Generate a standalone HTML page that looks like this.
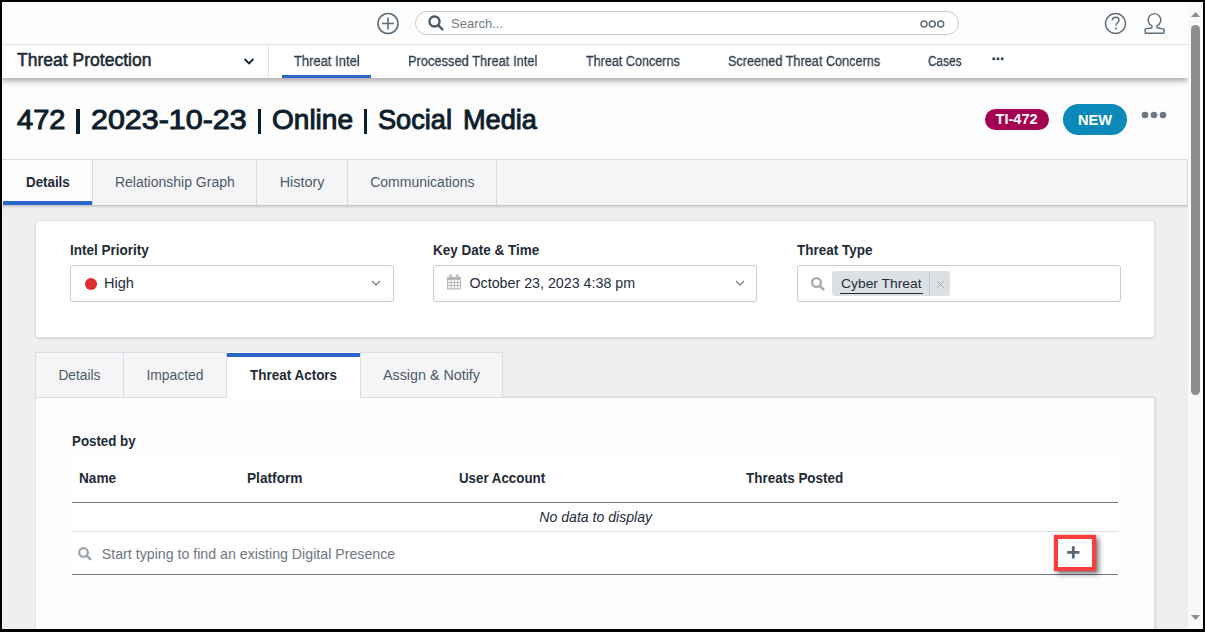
<!DOCTYPE html>
<html><head><meta charset="utf-8"><title>Threat Intel</title>
<style>
html,body{margin:0;padding:0;width:1205px;height:632px;overflow:hidden;background:#000;font-family:"Liberation Sans", sans-serif;}
#c{position:absolute;left:0;top:0;width:1205px;height:632px;overflow:hidden;clip-path:inset(2px 2px 3px 2px);}
.t{position:absolute;z-index:3;white-space:nowrap;line-height:1;}
svg{display:block;z-index:3}
</style></head><body><div id="c">
<div style="position:absolute;left:0px;top:0px;width:1205px;height:632px;background:#efefef"></div>
<div style="position:absolute;left:0px;top:0px;width:1188px;height:44px;background:#fdfdfd"></div>
<div style="position:absolute;left:0px;top:44px;width:1188px;height:1px;background:#dfe3e8"></div>
<div style="position:absolute;left:0px;top:78px;width:1188px;height:81px;background:#fdfdfd"></div>
<div style="position:absolute;left:0px;top:45px;width:1188px;height:33px;background:#fff;box-shadow:0 2px 7px rgba(0,0,0,0.42);z-index:2;clip-path:inset(0 0 -20px 0)"></div>
<svg style="position:absolute;left:376px;top:12px" width="24" height="24" viewBox="0 0 24 24"><circle cx="12" cy="11.5" r="10" fill="none" stroke="#5e6e7a" stroke-width="1.6"/><path d="M12 5.6v11.8M6.1 11.5h11.8" stroke="#5e6e7a" stroke-width="1.6"/></svg>
<div style="position:absolute;left:415px;top:11px;width:543px;height:23px;border:1px solid #c9c9c9;border-radius:12px;background:#fff;box-sizing:border-box;width:544px;height:24px"></div>
<svg style="position:absolute;left:427px;top:14px" width="18" height="18" viewBox="0 0 18 18"><circle cx="7.5" cy="7.5" r="5" fill="none" stroke="#4b5b67" stroke-width="2.4"/><path d="M11.2 11.2l4.2 4.2" stroke="#4b5b67" stroke-width="2.4" stroke-linecap="round"/></svg>
<div class="t" style="left:451.00px;top:17.00px;font-size:13px;font-weight:normal;color:#6f7a84;font-style:normal;">Search...</div>
<svg style="position:absolute;left:919px;top:19px" width="27" height="10" viewBox="0 0 27 10"><g fill="none" stroke="#5e6e7a" stroke-width="1.5"><circle cx="5" cy="5.1" r="3"/><circle cx="13.35" cy="5.1" r="3"/><circle cx="21.7" cy="5.1" r="3"/></g></svg>
<svg style="position:absolute;left:1104px;top:12px" width="24" height="24" viewBox="0 0 24 24"><circle cx="11.5" cy="11.5" r="10" fill="none" stroke="#5e6e7a" stroke-width="1.4"/><path d="M8.3 8.6c0-2 1.5-3.3 3.4-3.3s3.3 1.3 3.3 3c0 2.3-3.1 2.6-3.1 5.5" fill="none" stroke="#5e6e7a" stroke-width="1.4"/><circle cx="11.9" cy="16.6" r="1" fill="#5e6e7a"/></svg>
<svg style="position:absolute;left:1143px;top:12px" width="23" height="23" viewBox="0 0 23 23"><path d="M8.9 13.7A6.3 6.3 0 1 1 14 13.7V15.7L21.2 17.1L20.8 21.2H2.4L1.9 17.1L8.9 15.7Z" fill="none" stroke="#5e6e7a" stroke-width="1.4" stroke-linejoin="round"/></svg>
<div class="t" style="left:17.40px;top:51.93px;font-size:17.8px;font-weight:normal;font-style:normal;color:#1d2b36;transform-origin:0 0;transform:scaleX(0.9857);-webkit-text-stroke:0.55px #1d2b36">Threat Protection</div>
<svg style="position:absolute;left:241.7px;top:56px" width="14" height="10" viewBox="0 0 14 10"><path d="M2.6 3l4.4 4.4 4.4-4.4" fill="none" stroke="#142332" stroke-width="1.8"/></svg>
<div style="position:absolute;left:268px;top:45px;width:1px;height:32px;background:#dde1e6;z-index:3"></div>
<div class="t" style="left:293.70px;top:54.15px;font-size:14px;font-weight:normal;font-style:normal;color:#2f3e4b;transform-origin:0 0;transform:scaleX(0.9280);-webkit-text-stroke:0.3px #2f3e4b;will-change:transform">Threat Intel</div>
<div style="position:absolute;left:282px;top:75px;width:89px;height:3px;background:#2a66c9;z-index:3"></div>
<div class="t" style="left:407.50px;top:54.15px;font-size:14px;font-weight:normal;font-style:normal;color:#2f3e4b;transform-origin:0 0;transform:scaleX(0.9203);-webkit-text-stroke:0.3px #2f3e4b;will-change:transform">Processed Threat Intel</div>
<div class="t" style="left:585.50px;top:54.15px;font-size:14px;font-weight:normal;font-style:normal;color:#2f3e4b;transform-origin:0 0;transform:scaleX(0.8998);-webkit-text-stroke:0.3px #2f3e4b;will-change:transform">Threat Concerns</div>
<div class="t" style="left:727.50px;top:54.15px;font-size:14px;font-weight:normal;font-style:normal;color:#2f3e4b;transform-origin:0 0;transform:scaleX(0.9074);-webkit-text-stroke:0.3px #2f3e4b;will-change:transform">Screened Threat Concerns</div>
<div class="t" style="left:927.90px;top:54.15px;font-size:14px;font-weight:normal;font-style:normal;color:#2f3e4b;transform-origin:0 0;transform:scaleX(0.8463);-webkit-text-stroke:0.3px #2f3e4b;will-change:transform">Cases</div>
<svg style="position:absolute;left:992px;top:57px" width="12" height="4" viewBox="0 0 12 4"><g fill="#2f3e4b"><rect x="0.5" y="0.5" width="2.6" height="2.6"/><rect x="4.7" y="0.5" width="2.6" height="2.6"/><rect x="8.9" y="0.5" width="2.6" height="2.6"/></g></svg>
<div class="t" style="left:17.10px;top:105.72px;font-size:27.5px;font-weight:normal;font-style:normal;color:#0d1e2d;transform-origin:0 0;transform:scaleX(1.0545);-webkit-text-stroke:1px #0d1e2d">472</div>
<div class="t" style="left:90.50px;top:105.72px;font-size:27.5px;font-weight:normal;font-style:normal;color:#0d1e2d;transform-origin:0 0;transform:scaleX(1.1063);-webkit-text-stroke:1px #0d1e2d">2023-10-23</div>
<div class="t" style="left:271.90px;top:105.72px;font-size:27.5px;font-weight:normal;font-style:normal;color:#0d1e2d;transform-origin:0 0;transform:scaleX(1.0189);-webkit-text-stroke:1px #0d1e2d">Online</div>
<div class="t" style="left:378.20px;top:105.72px;font-size:27.5px;font-weight:normal;font-style:normal;color:#0d1e2d;transform-origin:0 0;transform:scaleX(0.9880);-webkit-text-stroke:1px #0d1e2d">Social</div>
<div class="t" style="left:463.40px;top:105.72px;font-size:27.5px;font-weight:normal;font-style:normal;color:#0d1e2d;transform-origin:0 0;transform:scaleX(0.9866);-webkit-text-stroke:1px #0d1e2d">Media</div>
<div style="position:absolute;left:76px;top:109px;width:3.5px;height:25px;background:#0d1e2d;z-index:3"></div>
<div style="position:absolute;left:257.5px;top:109px;width:3.5px;height:25px;background:#0d1e2d;z-index:3"></div>
<div style="position:absolute;left:363.5px;top:109px;width:3.5px;height:25px;background:#0d1e2d;z-index:3"></div>
<div style="position:absolute;left:985px;top:109px;width:64px;height:21px;background:#a4004f;border-radius:11px"></div>
<div class="t" style="left:995.50px;top:112.14px;font-size:14.6px;font-weight:bold;color:#fff;font-style:normal;">TI-472</div>
<div style="position:absolute;left:1063px;top:104px;width:64px;height:31px;background:#0b89b9;border-radius:16px"></div>
<div class="t" style="left:1078.00px;top:112.64px;font-size:14.6px;font-weight:bold;color:#fff;font-style:normal;">NEW</div>
<svg style="position:absolute;left:1141px;top:111px" width="26" height="8" viewBox="0 0 26 8"><g fill="#6b7884"><circle cx="4" cy="4" r="3.3"/><circle cx="13" cy="4" r="3.3"/><circle cx="22" cy="4" r="3.3"/></g></svg>
<div style="position:absolute;left:2px;top:159px;width:1186px;height:47px;background:#f5f5f7;border-top:1px solid #d8dde2;border-bottom:1px solid #c4c8cc;box-sizing:border-box;box-shadow:0 1px 2px rgba(0,0,0,0.15)"></div>
<div style="position:absolute;left:2px;top:160px;width:90px;height:45px;background:#fdfdfd"></div>
<div style="position:absolute;left:3px;top:201px;width:89px;height:4px;background:#2a66c9"></div>
<div style="position:absolute;left:92px;top:160px;width:1px;height:45px;background:#d8dde2"></div>
<div style="position:absolute;left:256px;top:160px;width:1px;height:45px;background:#d8dde2"></div>
<div style="position:absolute;left:347px;top:160px;width:1px;height:45px;background:#d8dde2"></div>
<div style="position:absolute;left:496px;top:160px;width:1px;height:45px;background:#d8dde2"></div>
<div style="position:absolute;left:1187px;top:160px;width:1px;height:45px;background:#d8dde2"></div>
<div class="t" style="left:25.60px;top:175.45px;font-size:14px;font-weight:bold;font-style:normal;color:#1d2b36;transform-origin:0 0;transform:scaleX(0.9521);">Details</div>
<div class="t" style="left:114.90px;top:175.15px;font-size:14px;font-weight:normal;color:#4b5a68;font-style:normal;">Relationship Graph</div>
<div class="t" style="left:279.70px;top:174.81px;font-size:14.4px;font-weight:normal;color:#4b5a68;font-style:normal;">History</div>
<div class="t" style="left:370.20px;top:175.15px;font-size:14px;font-weight:normal;color:#4b5a68;font-style:normal;">Communications</div>
<div style="position:absolute;left:36px;top:221px;width:1118px;height:116px;background:#fff;border-radius:3px;box-shadow:0 0 0 1px #dcdfe2,0 1px 3px rgba(0,0,0,0.18)"></div>
<div class="t" style="left:69.80px;top:242.65px;font-size:14px;font-weight:bold;font-style:normal;color:#1d2b36;transform-origin:0 0;transform:scaleX(0.9657);">Intel Priority</div>
<div class="t" style="left:433.30px;top:242.65px;font-size:14px;font-weight:bold;font-style:normal;color:#1d2b36;transform-origin:0 0;transform:scaleX(0.9633);">Key Date &amp; Time</div>
<div class="t" style="left:797.00px;top:242.65px;font-size:14px;font-weight:bold;font-style:normal;color:#1d2b36;transform-origin:0 0;transform:scaleX(0.9630);">Threat Type</div>
<div style="position:absolute;left:70px;top:265.2px;width:324px;height:36.4px;border:1px solid #c9ccd0;border-radius:3px;box-sizing:border-box;background:#fff"></div>
<div style="position:absolute;left:433px;top:265.2px;width:324px;height:36.4px;border:1px solid #c9ccd0;border-radius:3px;box-sizing:border-box;background:#fff"></div>
<div style="position:absolute;left:796.5px;top:265.2px;width:324px;height:36.4px;border:1px solid #c9ccd0;border-radius:3px;box-sizing:border-box;background:#fff"></div>
<div style="position:absolute;left:85px;top:277.5px;width:12px;height:12px;background:#e12d2d;border-radius:50%"></div>
<div class="t" style="left:103.90px;top:275.64px;font-size:14.6px;font-weight:normal;color:#1f2d3d;font-style:normal;">High</div>
<svg style="position:absolute;left:369.5px;top:279px" width="12" height="8" viewBox="0 0 12 8"><path d="M2 2l4 4 4-4" fill="none" stroke="#6c7885" stroke-width="1.1"/></svg>
<svg style="position:absolute;left:733.5px;top:279px" width="12" height="8" viewBox="0 0 12 8"><path d="M2 2l4 4 4-4" fill="none" stroke="#6c7885" stroke-width="1.1"/></svg>
<svg style="position:absolute;left:446px;top:274px" width="16" height="16" viewBox="0 0 16 16"><g fill="#b3b8bd"><rect x="1" y="3" width="14" height="12.5"/></g><g fill="#fff"><rect x="2.3" y="6" width="2.3" height="2"/><rect x="5.6" y="6" width="2.3" height="2"/><rect x="8.9" y="6" width="2.3" height="2"/><rect x="12.1" y="6" width="1.9" height="2"/><rect x="2.3" y="9" width="2.3" height="2"/><rect x="5.6" y="9" width="2.3" height="2"/><rect x="8.9" y="9" width="2.3" height="2"/><rect x="12.1" y="9" width="1.9" height="2"/><rect x="2.3" y="12" width="2.3" height="2.3"/><rect x="5.6" y="12" width="2.3" height="2.3"/><rect x="8.9" y="12" width="2.3" height="2.3"/><rect x="12.1" y="12" width="1.9" height="2.3"/></g><g fill="none" stroke="#b3b8bd" stroke-width="1.2"><rect x="3.6" y="0.8" width="2" height="3.5" rx="1"/><rect x="10.4" y="0.8" width="2" height="3.5" rx="1"/></g></svg>
<div class="t" style="left:469.50px;top:275.94px;font-size:14.25px;font-weight:normal;color:#1f2d3d;font-style:normal;">October 23, 2023 4:38 pm</div>
<svg style="position:absolute;left:810px;top:276px" width="16" height="16" viewBox="0 0 16 16"><circle cx="6.5" cy="6.5" r="4.4" fill="none" stroke="#a3abb3" stroke-width="2.3"/><path d="M10 10l3.4 3.4" stroke="#a3abb3" stroke-width="2.6" stroke-linecap="round"/></svg>
<div style="position:absolute;left:832px;top:271px;width:118px;height:25px;background:#dcdfe3;border-radius:3px"></div>
<div style="position:absolute;left:929px;top:271px;width:1px;height:25px;background:#c2c7cc"></div>
<div class="t" style="left:840.70px;top:276.83px;font-size:13.2px;font-weight:normal;font-style:normal;color:#1f2d3d;transform-origin:0 0;transform:scaleX(1.0508);">Cyber Threat</div>
<div style="position:absolute;left:839.5px;top:292.6px;width:83px;height:1.6px;background:#1d2b36"></div>
<svg style="position:absolute;left:935.8px;top:279.6px" width="9" height="9" viewBox="0 0 9 9"><path d="M1.2 1.2l6.6 6.6M7.8 1.2l-6.6 6.6" stroke="#a3a8ad" stroke-width="1"/></svg>
<div style="position:absolute;left:36px;top:397px;width:1118px;height:240px;background:#fdfdfd;border-radius:3px;box-shadow:0 0 0 1px #e0e2e5,1px 1px 3px rgba(0,0,0,0.2)"></div>
<div style="position:absolute;left:35px;top:352px;width:468px;height:46px;background:#f5f5f7;border:1px solid #d8dde2;box-sizing:border-box"></div>
<div style="position:absolute;left:123px;top:352px;width:1px;height:46px;background:#d8dde2"></div>
<div style="position:absolute;left:226px;top:352px;width:1px;height:46px;background:#d8dde2"></div>
<div style="position:absolute;left:360px;top:352px;width:1px;height:46px;background:#d8dde2"></div>
<div style="position:absolute;left:227px;top:352px;width:133px;height:46px;background:#fff"></div>
<div style="position:absolute;left:227px;top:353px;width:133px;height:4px;background:#2a66c9"></div>
<div style="position:absolute;left:502px;top:397px;width:653px;height:1px;background:#d8dde2"></div>
<div class="t" style="left:58.40px;top:368.87px;font-size:13.74px;font-weight:normal;color:#4b5a68;font-style:normal;">Details</div>
<div class="t" style="left:146.40px;top:368.73px;font-size:13.9px;font-weight:normal;color:#4b5a68;font-style:normal;">Impacted</div>
<div class="t" style="left:249.90px;top:368.35px;font-size:14px;font-weight:bold;font-style:normal;color:#1d2b36;transform-origin:0 0;transform:scaleX(0.9624);">Threat Actors</div>
<div class="t" style="left:383.00px;top:368.40px;font-size:14.3px;font-weight:normal;color:#4b5a68;font-style:normal;">Assign &amp; Notify</div>
<div style="position:absolute;left:72px;top:453px;width:1046px;height:122px;background:#fff"></div>
<div class="t" style="left:71.90px;top:434.45px;font-size:14px;font-weight:bold;font-style:normal;color:#1d2b36;transform-origin:0 0;transform:scaleX(0.9507);">Posted by</div>
<div class="t" style="left:79.00px;top:470.65px;font-size:14px;font-weight:bold;font-style:normal;color:#1d2b36;transform-origin:0 0;transform:scaleX(0.9725);">Name</div>
<div class="t" style="left:246.60px;top:470.65px;font-size:14px;font-weight:bold;font-style:normal;color:#1d2b36;transform-origin:0 0;transform:scaleX(0.9771);">Platform</div>
<div class="t" style="left:459.20px;top:470.65px;font-size:14px;font-weight:bold;font-style:normal;color:#1d2b36;transform-origin:0 0;transform:scaleX(0.9514);">User Account</div>
<div class="t" style="left:746.00px;top:470.65px;font-size:14px;font-weight:bold;font-style:normal;color:#1d2b36;transform-origin:0 0;transform:scaleX(0.9619);">Threats Posted</div>
<div style="position:absolute;left:72px;top:502px;width:1046px;height:1px;background:#6c7782"></div>
<div class="t" style="left:539.30px;top:510.06px;font-size:14.1px;font-weight:normal;color:#1f2d3d;font-style:italic;">No data to display</div>
<div style="position:absolute;left:72px;top:531px;width:1046px;height:1px;background:#dde1e5"></div>
<svg style="position:absolute;left:77px;top:546px" width="16" height="16" viewBox="0 0 16 16"><circle cx="6.5" cy="6.5" r="4.3" fill="none" stroke="#9aa3ab" stroke-width="2.3"/><path d="M9.8 9.8l3.4 3.4" stroke="#9aa3ab" stroke-width="2.6" stroke-linecap="round"/></svg>
<div class="t" style="left:101.80px;top:546.99px;font-size:14.19px;font-weight:normal;color:#6f7780;font-style:normal;">Start typing to find an existing Digital Presence</div>
<div style="position:absolute;left:72px;top:574px;width:1046px;height:1px;background:#6c7782"></div>
<div style="position:absolute;left:1054.3px;top:535px;width:41.7px;height:35.5px;border:4px solid #fd3e3e;box-sizing:border-box;background:#fff;box-shadow:3px 3px 5px rgba(0,0,0,0.5),0 0 1px #fd3e3e"></div>
<svg style="position:absolute;left:1066px;top:545px" width="14" height="14" viewBox="0 0 14 14"><path d="M7.3 1.2v12.3M1.2 7.3h12.3" stroke="#5a6672" stroke-width="2.8"/></svg>
<div style="position:absolute;left:1188px;top:0px;width:17px;height:632px;background:#f9f9f9;z-index:5"></div>
<svg style="position:absolute;left:1188px;top:2px;z-index:6" width="15" height="627" viewBox="0 0 15 627"><path d="M3 15h9l-4.5-5z" fill="#8d8d8d"/><rect x="3" y="23" width="9" height="370" rx="4.5" fill="#8d8d8d"/><path d="M3 613h9l-4.5 5z" fill="#8d8d8d"/></svg>
</div></body></html>
